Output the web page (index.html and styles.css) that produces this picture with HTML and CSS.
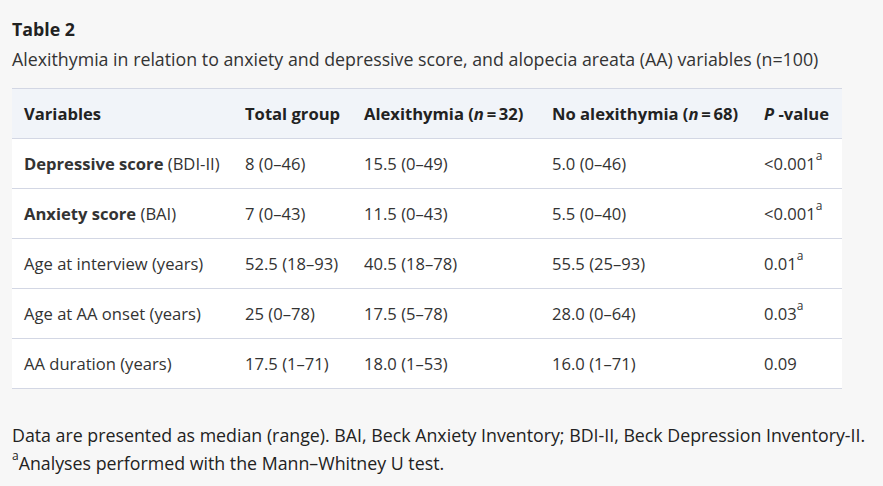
FILE: index.html
```html
<!DOCTYPE html>
<html>
<head>
<meta charset="utf-8">
<link rel="stylesheet" href="styles.css">
</head>
<body>
<div class="page">
  <h2 class="title">Table 2</h2>
  <p class="caption">Alexithymia in relation to anxiety and depressive score, and alopecia areata (AA) variables (n=100)</p>
  <table class="data">
    <colgroup>
      <col class="c1"><col class="c2"><col class="c3"><col class="c4"><col class="c5">
    </colgroup>
    <thead>
      <tr>
        <th>Variables</th>
        <th>Total group</th>
        <th>Alexithymia (<i>n</i>&#8201;=&#8201;32)</th>
        <th>No alexithymia (<i>n</i>&#8201;=&#8201;68)</th>
        <th><i>P</i> -value</th>
      </tr>
    </thead>
    <tbody>
      <tr><td><b>Depressive score</b> (BDI-II)</td><td>8 (0–46)</td><td>15.5 (0–49)</td><td>5.0 (0–46)</td><td>&lt;0.001<sup>a</sup></td></tr>
      <tr><td><b>Anxiety score</b> (BAI)</td><td>7 (0–43)</td><td>11.5 (0–43)</td><td>5.5 (0–40)</td><td>&lt;0.001<sup>a</sup></td></tr>
      <tr><td>Age at interview (years)</td><td>52.5 (18–93)</td><td>40.5 (18–78)</td><td>55.5 (25–93)</td><td>0.01<sup>a</sup></td></tr>
      <tr><td>Age at AA onset (years)</td><td>25 (0–78)</td><td>17.5 (5–78)</td><td>28.0 (0–64)</td><td>0.03<sup>a</sup></td></tr>
      <tr><td>AA duration (years)</td><td>17.5 (1–71)</td><td>18.0 (1–53)</td><td>16.0 (1–71)</td><td>0.09</td></tr>
    </tbody>
  </table>
  <div class="notes">
    <p>Data are presented as median (range). BAI, Beck Anxiety Inventory; BDI-II, Beck Depression Inventory-II.</p>
    <p><sup>a</sup>Analyses performed with the Mann–Whitney U test.</p>
  </div>
</div>
</body>
</html>
```
FILE: styles.css
```css
html, body {
  margin: 0;
  padding: 0;
  background: #f7f7f7;
}
body {
  font-family: "Open Sans", Lato, sans-serif;
  color: #222;
}
.page {
  padding: 18px 12px 0 12px;
}
.title {
  margin: 0;
  font-size: 17.8px;
  font-weight: 700;
  line-height: 22px;
  color: #222;
}
.caption {
  margin: 7px 0 0 0;
  font-size: 17.8px;
  line-height: 24px;
  color: #333;
}
.data {
  margin-top: 17px;
  width: 830px;
  border-collapse: collapse;
  table-layout: fixed;
  background: #fff;
  font-size: 16.6px;
}
.c1 { width: 221px; }
.c2 { width: 119px; }
.c3 { width: 188px; }
.c4 { width: 212px; }
.c5 { width: 90px; }
.data th, .data td {
  text-align: left;
  padding: 0 0 0 12px;
  height: 49px;
  border-top: 1px solid #d3d7e4;
  border-bottom: 1px solid #d3d7e4;
  white-space: nowrap;
  vertical-align: middle;
}
.data thead tr {
  background: #f1f4f9;
}
.data th {
  font-weight: 700;
  color: #222;
}
.data td {
  color: #333;
}
.data sup {
  font-size: 12px;
  line-height: 0;
  vertical-align: 10px;
}
.notes {
  margin-top: 32px;
  font-size: 17.8px;
  color: #222;
}
.notes p {
  margin: 0;
  line-height: 28px;
}
.notes sup {
  font-size: 12px;
  line-height: 0;
  vertical-align: 10px;
}
```
